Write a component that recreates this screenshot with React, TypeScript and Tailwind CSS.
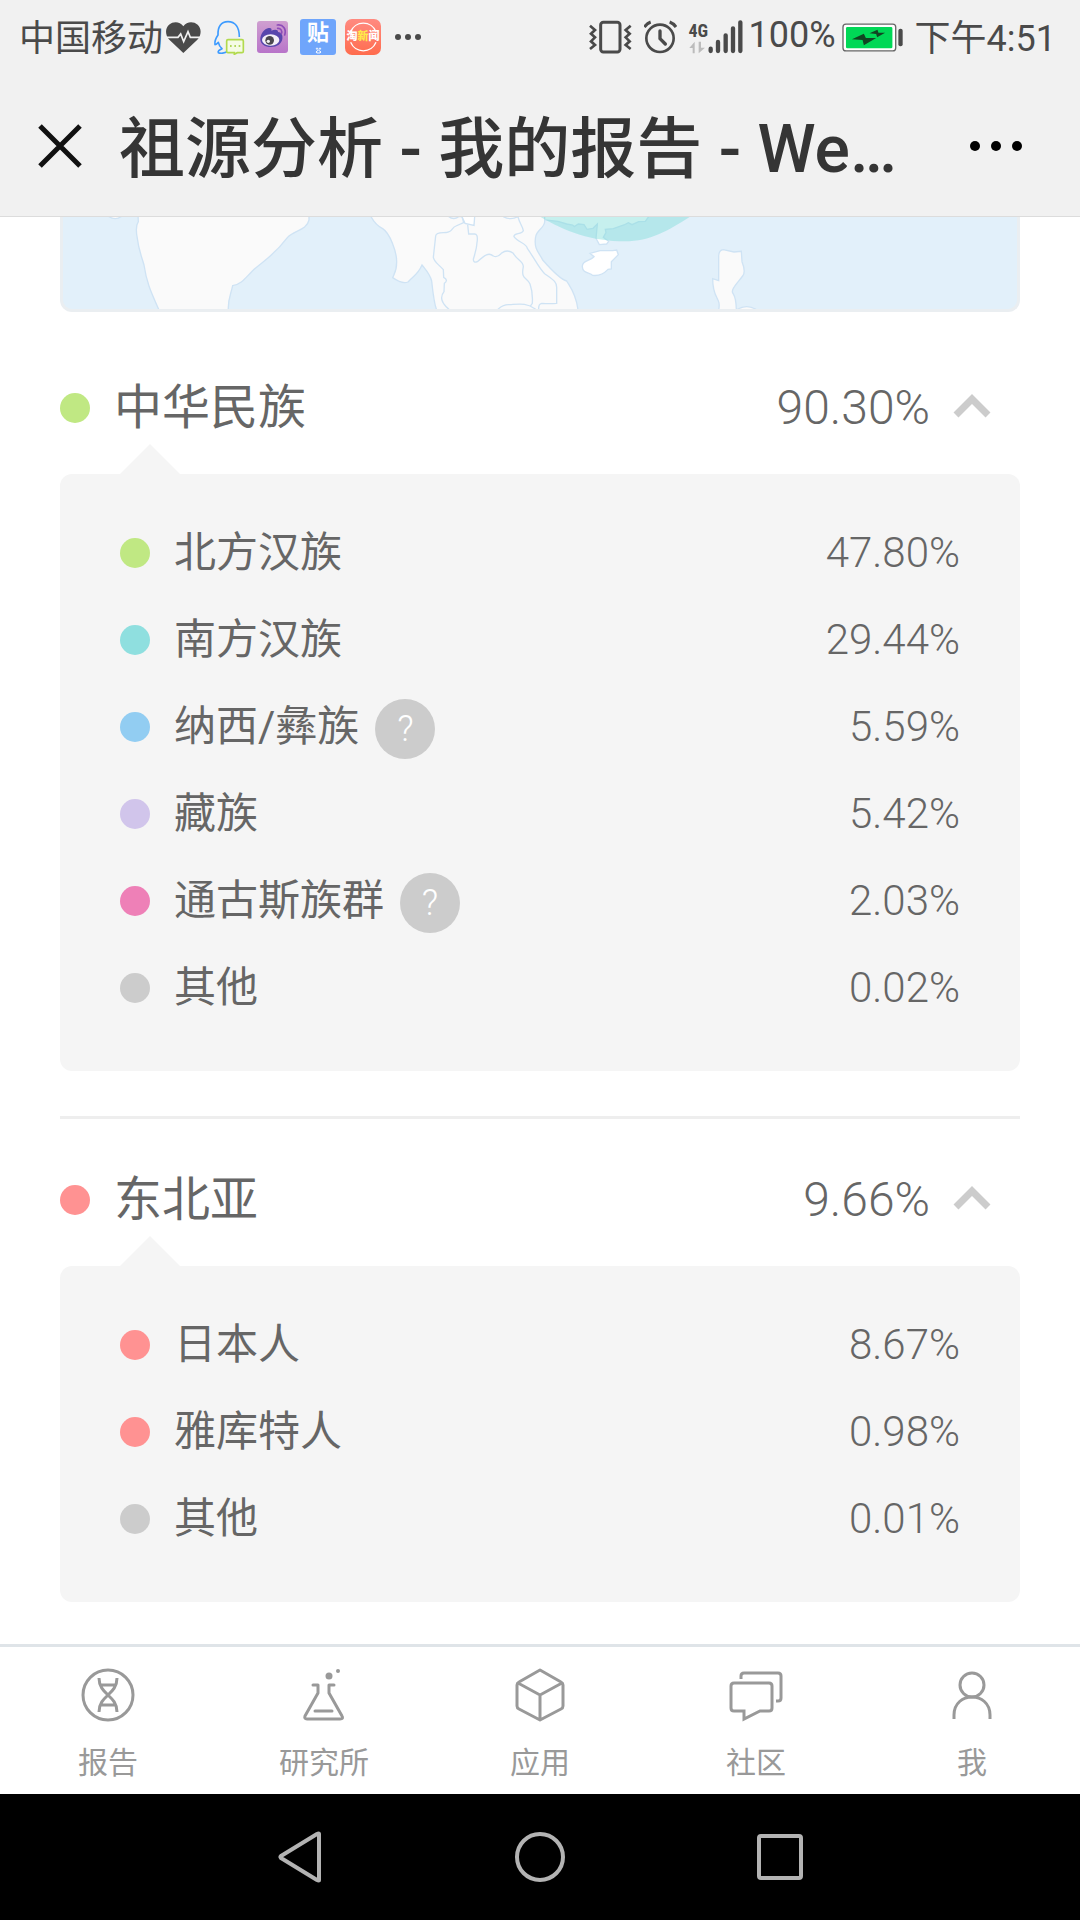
import { useState } from 'react';

type Item = { name: string; value: string; dot: string; help?: boolean };
type Group = { id: string; name: string; value: string; dot: string; items: Item[] };

const groups: Group[] = [
  {
    id: 'china',
    name: '中华民族',
    value: '90.30%',
    dot: 'bg-[#c0e883]',
    items: [
      { name: '北方汉族', value: '47.80%', dot: 'bg-[#c0e883]' },
      { name: '南方汉族', value: '29.44%', dot: 'bg-[#8fdfdf]' },
      { name: '纳西/彝族', value: '5.59%', dot: 'bg-[#92cdf2]', help: true },
      { name: '藏族', value: '5.42%', dot: 'bg-[#d1c5eb]' },
      { name: '通古斯族群', value: '2.03%', dot: 'bg-[#ee80b7]', help: true },
      { name: '其他', value: '0.02%', dot: 'bg-[#cccccc]' },
    ],
  },
  {
    id: 'northeast-asia',
    name: '东北亚',
    value: '9.66%',
    dot: 'bg-[#ff9292]',
    items: [
      { name: '日本人', value: '8.67%', dot: 'bg-[#ff9292]' },
      { name: '雅库特人', value: '0.98%', dot: 'bg-[#ff9292]' },
      { name: '其他', value: '0.01%', dot: 'bg-[#cccccc]' },
    ],
  },
];

const StatusBar = () => (
  <div className="flex h-[60px] items-center justify-between pl-[19px] pr-6 text-4xl text-[#4a4a4a]">
    <div className="flex items-center gap-3">
      <div className="flex items-center gap-[3px]">
        <span className="pt-1 leading-[48px]">中国移动</span>
        <svg className="h-[33px] w-[35px]" viewBox="501 60 105 99">
          <path d="M553 156 L511 116 C498 102 498 82 510 71 C523 60 543 61 553 76 C563 61 583 60 596 71 C608 82 608 102 595 116 Z" fill="#4a4a4a" />
          <path d="M501 109 H537 L545 99 L554 122 L567 92 L574 109 H606" fill="none" stroke="#f1f1f1" strokeWidth="5" />
        </svg>
      </div>
      <svg className="h-[35px] w-8" viewBox="642 57 96 105" fill="none">
        <path d="M721 108 C721 78 708 62 687 62 C666 62 656 78 657 102 C650 112 646 120 648 131 C652 131 655 127 658 124 C660 133 663 138 669 143 C660 147 656 151 658 155 C664 158 678 157 684 152" stroke="#3d9bff" strokeWidth="5" strokeLinejoin="round" />
        <path d="M687 116 H729 Q733 116 733 120 V151 Q733 155 729 155 H715 L706 160 V155 H687 Q683 155 683 151 V120 Q683 116 687 116 Z" fill="#f5fbe5" stroke="#b2da4e" strokeWidth="5" />
        <path d="M693 135 h5 M706 135 h5 M719 135 h5" stroke="#9ccc30" strokeWidth="5" />
      </svg>
      <svg className="h-8 w-[31px]" viewBox="777 63 93 96">
        <defs>
          <linearGradient id="weibo" x1="0" y1="0" x2="0" y2="1">
            <stop offset="0" stopColor="#cf9fd0" />
            <stop offset="1" stopColor="#b874c9" />
          </linearGradient>
        </defs>
        <rect x="777" y="63" width="93" height="96" rx="9" fill="url(#weibo)" />
        <path d="M787 119 C786 103 799 86 812 84 C820 83 822 87 820 92 C830 87 841 88 840 96 C851 98 855 106 853 117 C851 132 836 141 819 141 C801 141 788 132 787 119 Z" fill="#5846ad" />
        <ellipse cx="818" cy="120" rx="26" ry="17" fill="#f4eff8" />
        <circle cx="815" cy="121" r="13" fill="#4b4850" />
        <circle cx="811" cy="124" r="5" fill="#eeeeee" />
        <path d="M838 75 C855 72 866 88 860 105 M839 85 C848 84 854 93 850 101" fill="none" stroke="#8d4db8" strokeWidth="5" strokeLinecap="round" />
      </svg>
      <div className="flex items-center gap-[9px]">
        <div className="flex size-9 flex-col items-center rounded-[3px] bg-[#6fa5fb] text-white">
          <span className="text-[22px] font-bold leading-[28px]">贴</span>
          <svg className="h-[7px] w-[7px]" viewBox="0 0 21 21" fill="none" stroke="#fff" strokeWidth="3">
            <circle cx="6" cy="5" r="2" />
            <circle cx="15" cy="5" r="2" />
            <path d="M10 9 L3 15 Q4 19 10 18 Q17 19 18 15 Z" />
          </svg>
        </div>
        <div className="relative flex size-9 items-center justify-center rounded-[7px] bg-linear-to-b from-[#ff8a80] to-[#ff6c4d]">
          <svg className="absolute size-9" viewBox="0 0 108 108" fill="none" stroke="#fff" strokeWidth="4">
            <path d="M17 38 A41 41 0 0 1 93 38 M17 70 A41 41 0 0 0 93 70" />
          </svg>
          <span className="relative whitespace-nowrap text-[11px] font-black leading-3 text-white">
            淘<span className="text-[#ffe94a]">新</span>闻
          </span>
        </div>
      </div>
      <svg className="h-2 w-[30px]" viewBox="0 0 30 8" fill="#4a4a4a">
        <circle cx="5" cy="4" r="3" />
        <circle cx="15" cy="4" r="3" />
        <circle cx="25" cy="4" r="3" />
      </svg>
    </div>

    <div className="flex items-center gap-3">
      <svg className="h-[34px] w-[43px]" viewBox="92 58 129 102" fill="none" stroke="#4a4a4a" strokeWidth="9">
        <rect x="127" y="65" width="58" height="89" rx="8" />
        <path d="M95 75 L110 88 L98 99 L110 110 L98 122 L110 133 L95 145 M217 75 L202 88 L214 99 L202 110 L214 122 L202 133 L217 145" strokeWidth="8" />
      </svg>
      <svg className="h-[34px] w-[33px]" viewBox="256 58 99 102" fill="none" stroke="#4a4a4a" strokeWidth="8">
        <circle cx="304" cy="113" r="41" />
        <path d="M304 91 V114 L320 130" strokeWidth="10" strokeLinecap="round" />
        <path d="M257 79 Q265 68 276 64 M352 79 Q344 68 333 64" strokeWidth="9" />
      </svg>
      <div className="flex items-center gap-[6px]">
        <div className="flex items-end gap-px">
          <div className="flex w-[18px] flex-col items-start">
            <span className="font-['Roboto_Condensed','Liberation_Sans_Narrow',Roboto] text-lg font-bold leading-[20px]">4G</span>
            <svg className="h-[13px] w-4" viewBox="388 119 48 39" fill="#bcbcbc">
              <path d="M405 121 V156 H399 V140 H389 Z M417 121 H424 V139 H436 L417 156 Z" />
            </svg>
          </div>
          <svg className="h-[34px] w-[35px]" viewBox="442 56 105 102" stroke="#4a4a4a" strokeWidth="13" strokeLinecap="round">
            <path d="M450 142 V149 M472 122 V149 M495 102 V149 M517 81 V149 M539 63 V149" />
          </svg>
        </div>
        <span className="pb-1 font-[Roboto]">100%</span>
        <svg className="h-[29px] w-[61px]" viewBox="850 63 184 87">
          <rect x="853" y="66" width="159" height="81" rx="9" fill="#fff" stroke="#666" strokeWidth="4" />
          <rect x="862" y="75" width="140" height="64" rx="4" fill="#00d856" />
          <path d="M880 112 L916 95 L922 108 H953 L916 130 L912 114 Z M933 94 L957 83 L960 92 H980 L956 106 L953 96 Z" fill="#114422" />
          <rect x="1020" y="80" width="13" height="53" rx="6" fill="#4a4a4a" />
        </svg>
      </div>
      <span className="pt-1 leading-[48px]">下午4:51</span>
    </div>
  </div>
);

const TitleBar = () => (
  <div className="flex h-[149px] items-center gap-9 px-[37px] pt-2">
    <button type="button" aria-label="关闭">
      <svg className="size-[46px]" viewBox="0 0 46 46" stroke="#111" strokeWidth="5">
        <path d="M3 3 L43 43 M43 3 L3 43" />
      </svg>
    </button>
    <h1 className="flex-1 whitespace-nowrap pt-2 text-[66px] font-medium leading-[84px] text-[#353535]">
      祖源分析 - 我的报告 - We…
    </h1>
    <button type="button" aria-label="更多" className="pr-5">
      <svg className="h-3 w-[54px]" viewBox="0 0 54 12" fill="#000">
        <circle cx="6" cy="6" r="5" />
        <circle cx="27" cy="6" r="5" />
        <circle cx="48" cy="6" r="5" />
      </svg>
    </button>
  </div>
);

const RegionMap = () => (
  <div className="overflow-hidden rounded-b-xl border-3 border-t-0 border-[#eaeef1] bg-[#e2f0fa]">
    <svg className="block w-full" viewBox="69 51 2862 276" fill="#fafafa" stroke="#cfe3f4" strokeWidth="4">
      <path d="M204 48 Q226 64 246 48" />
      <path d="M294 44 L295 65 C288 75 288 95 292 115 C296 150 305 170 312 195 C320 250 335 280 357 330 H565 C563 300 572 285 578 257 C605 252 615 235 635 215 C665 185 700 170 742 113 C762 90 800 92 807 60 V44 Z" />
      <path d="M990 44 C1000 65 1012 78 1028 86 C1050 100 1070 155 1070 185 C1070 215 1062 222 1058 233 C1075 245 1090 252 1104 246 C1120 228 1135 222 1146 195 C1155 207 1170 222 1175 243 C1180 290 1182 310 1190 330 H1614 C1608 280 1590 260 1580 243 C1560 238 1530 205 1508 180 C1500 160 1480 150 1487 110 C1490 90 1512 85 1514 66 V44 Z" />
      <path d="M1224 48 Q1240 62 1256 50 L1266 50 L1271 68 L1248 78 C1232 84 1240 98 1210 98 Q1188 98 1187 108 L1180 172 C1184 188 1195 192 1210 209 L1211 232 Q1226 240 1213 250 L1212 275 C1200 290 1202 308 1227 328" fill="none" />
      <path d="M1283 74 L1286 102 H1304 Q1313 102 1312 120 C1310 150 1305 160 1300 178 Q1300 190 1312 185 C1335 165 1346 156 1360 168 Q1372 174 1384 160 Q1402 146 1420 160 C1430 180 1450 182 1450 200 C1442 240 1460 230 1470 252 C1480 280 1477 300 1477 310 L1470 320 M1390 50 Q1410 62 1434 50 C1438 70 1448 78 1450 92 C1445 104 1420 98 1422 110 C1432 126 1460 130 1462 145 C1480 170 1500 210 1515 222 C1540 240 1550 245 1550 262 V310 Q1530 312 1505 310 Q1495 312 1496 328 M1374 328 Q1390 312 1410 314 C1440 312 1460 308 1487 328" fill="none" />
      <path d="M1266 50 L1275 70 L1302 76 L1304 50" fill="#fff" />
      <path d="M1514 44 V60 L1554 64 L1580 72 L1598 75 L1603 80 L1615 72 L1632 74 L1641 88 L1659 85 L1672 72 L1668 115 L1678 134 L1700 132 L1706 124 L1690 112 L1698 98 L1696 88 L1720 86 L1752 75 L1765 68 L1776 74 L1796 65 L1816 64 L1826 50 V44 Z" fill="#fff" />
      <path d="M1650 160 L1680 152 H1718 L1730 150 L1735 164 L1714 185 V207 L1704 208 C1688 225 1674 228 1658 226 C1650 216 1628 222 1627 200 C1626 182 1648 184 1662 170 Z" fill="#fff" />
      <path d="M2036 330 C2044 290 2018 300 2018 236 L2036 242 V170 Q2036 150 2050 149 L2082 156 L2104 154 L2106 185 Q2118 215 2108 228 C2090 252 2077 262 2077 275 C2078 285 2088 280 2089 330 Z" />
      <path d="M2092 328 Q2120 312 2148 328" />
      <path d="M1490 44 C1570 92 1650 124 1755 124 C1835 124 1890 88 1960 44 Z" fill="#78dbd6" fillOpacity="0.42" stroke="none" />
    </svg>
  </div>
);

const AncestryGroup = ({ group }: { group: Group }) => {
  const [open, setOpen] = useState(true);

  return (
    <section className="pb-[45px] pt-[45px] last:pb-10">
      <button
        type="button"
        aria-expanded={open}
        aria-controls={group.id}
        onClick={() => setOpen(!open)}
        className="flex h-[72px] w-full items-center pr-[29px] text-5xl text-[#666]"
      >
        <span className={`mr-6 size-[30px] rounded-full ${group.dot}`} />
        <span className="flex-1 text-left">{group.name}</span>
        <span className="mr-[23px] font-light">{group.value}</span>
        <svg
          className={`mb-1 h-6 w-[38px] ${open ? '' : 'rotate-180'}`}
          viewBox="0 0 38 24"
          fill="none"
          stroke="#ccc"
          strokeWidth="7"
        >
          <path d="M3 21 L19 5 L35 21" />
        </svg>
      </button>
      {open && (
        <div id={group.id}>
          <svg className="ml-[60px] block h-[30px] w-[60px]" viewBox="0 0 60 30" fill="#f5f5f5">
            <path d="M0 30 L30 0 L60 30 Z" />
          </svg>
          <ul className="rounded-xl bg-[#f5f5f5] px-[60px] pb-10 pt-[35px]">
            {group.items.map((item) => (
              <li key={item.name} className="flex h-[87px] items-center text-[42px] text-[#666]">
                <span className={`mr-6 size-[30px] rounded-full ${item.dot}`} />
                <span>{item.name}</span>
                {item.help && (
                  <button
                    type="button"
                    aria-label={`${item.name}说明`}
                    className="ml-4 mt-1 size-[60px] rounded-full bg-[#ccc] text-4xl font-light text-white"
                  >
                    ?
                  </button>
                )}
                <span className="ml-auto font-light">{item.value}</span>
              </li>
            ))}
          </ul>
        </div>
      )}
    </section>
  );
};

const tabs = [
  {
    name: '报告',
    icon: (
      <>
        <circle cx="27" cy="27" r="25" />
        <path d="M18 10 C18 27 36 27 36 44 M36 10 C36 27 18 27 18 44 M20 17 H34 M20 37 H34" />
      </>
    ),
  },
  {
    name: '研究所',
    icon: (
      <>
        <path d="M16 17 H21 V25 L8 48 Q7 51 10 51 H43 Q47 51 45 48 L32 25 V17 H37" strokeLinecap="round" strokeLinejoin="round" />
        <path d="M18 43 H35" strokeLinecap="round" />
        <circle cx="32" cy="8" r="3.5" fill="#999" stroke="none" />
        <circle cx="41" cy="3" r="2" fill="#999" stroke="none" />
      </>
    ),
  },
  {
    name: '应用',
    icon: <path d="M27 2 L48 14 Q50 15 50 17 V38 Q50 40 48 41 L27 52 L6 41 Q4 40 4 38 V17 Q4 15 6 14 Z M5 15 L27 27 L49 15 M27 27 V52" strokeLinejoin="round" />,
  },
  {
    name: '社区',
    icon: (
      <>
        <path d="M5 15 H40 Q43 15 43 18 V40 Q43 43 40 43 H31 L15 51 V43 H5 Q2 43 2 40 V18 Q2 15 5 15 Z" />
        <path d="M12 11 V8 Q12 5 15 5 H49 Q52 5 52 8 V30 Q52 33 49 33 H47" />
      </>
    ),
  },
  {
    name: '我',
    icon: (
      <>
        <circle cx="27" cy="17" r="12" />
        <path d="M9 51 V47 C9 23 45 23 45 47 V51" />
      </>
    ),
  },
];

const TabBar = () => (
  <nav className="grid grid-cols-5 border-t-3 border-[#dfe4e8] bg-white">
    {tabs.map((tab) => (
      <a key={tab.name} href="#" className="flex h-[147px] flex-col items-center pt-[21px] text-3xl text-[#999]">
        <svg className="size-[54px]" viewBox="0 0 54 54" fill="none" stroke="#999" strokeWidth="3">
          {tab.icon}
        </svg>
        <span className="mt-[21px] leading-10">{tab.name}</span>
      </a>
    ))}
  </nav>
);

const SystemNav = () => (
  <div className="flex h-[126px] items-center justify-center gap-[186px] bg-black">
    <button type="button" aria-label="返回">
      <svg className="size-[54px]" viewBox="0 0 54 54" fill="none" stroke="#b3b3b3" strokeWidth="4" strokeLinejoin="round">
        <path d="M46 4 V50 Q46 51 44 50 L8 28 Q7 27 8 26 L44 4 Q46 3 46 4 Z" />
      </svg>
    </button>
    <button type="button" aria-label="主页">
      <svg className="size-[54px]" viewBox="0 0 54 54" fill="none" stroke="#b3b3b3" strokeWidth="4">
        <circle cx="27" cy="27" r="23" />
      </svg>
    </button>
    <button type="button" aria-label="最近任务">
      <svg className="size-[54px]" viewBox="0 0 54 54" fill="none" stroke="#b3b3b3" strokeWidth="4">
        <rect x="6" y="6" width="42" height="42" rx="2" />
      </svg>
    </button>
  </div>
);

const App = () => {
  return (
    <div className="flex min-h-screen flex-col bg-white font-[Roboto,'Noto_Sans_CJK_SC',sans-serif]">
      <header className="border-b border-[#dcdcdc] bg-[#f1f1f1] pt-[7px]">
        <StatusBar />
        <TitleBar />
      </header>
      <main className="flex-1 px-[60px]">
        <RegionMap />
        <div className="divide-y-3 divide-[#eeeeee] pt-[15px]">
          {groups.map((group) => (
            <AncestryGroup key={group.id} group={group} />
          ))}
        </div>
      </main>
      <TabBar />
      <SystemNav />
    </div>
  );
};

export default App;
